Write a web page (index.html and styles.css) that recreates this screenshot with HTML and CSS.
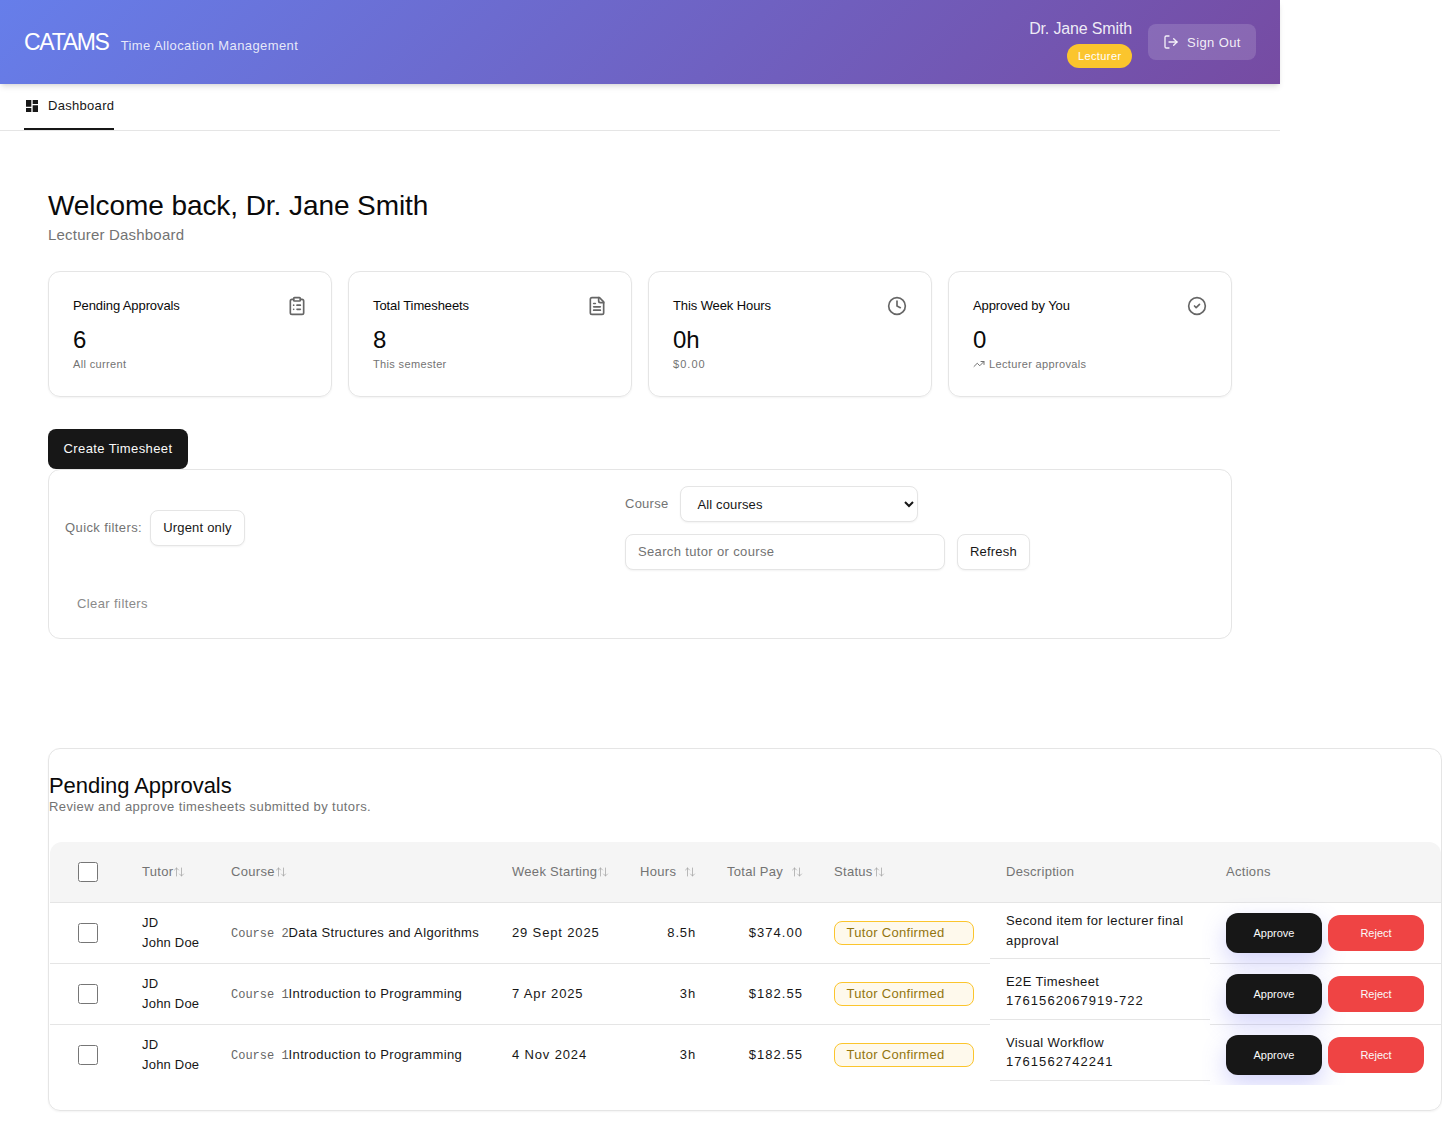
FILE: index.html
```html
<!DOCTYPE html>
<html lang="en">
<head>
    <meta charset="UTF-8">
    <title>CATAMS</title>
    <link rel="stylesheet" href="styles.css">
</head>
<body>
<div class="app">
    <header class="topbar">
        <div class="brand">
            <span class="brand-name">CATAMS</span>
            <span class="brand-sub">Time Allocation Management</span>
        </div>
        <div class="account">
            <div class="user">
                <span class="user-name">Dr. Jane Smith</span>
                <span class="role-badge">Lecturer</span>
            </div>
            <button class="signout">
                <svg class="icon-16" viewBox="0 0 24 24"><path d="M9 21H5a2 2 0 0 1-2-2V5a2 2 0 0 1 2-2h4"/><path d="M16 17l5-5-5-5"/><path d="M21 12H9"/></svg>
                Sign Out
            </button>
        </div>
    </header>

    <nav class="tabs">
        <a class="tab current">
            <svg class="icon-dash" viewBox="0 0 24 24"><path d="M3 13h8V3H3v10zm0 8h8v-6H3v6zm10 0h8V11h-8v10zm0-18v6h8V3h-8z"/></svg>
            Dashboard
        </a>
    </nav>

    <main class="main">
        <h1 class="page-title">Welcome back, Dr. Jane Smith</h1>
        <p class="page-sub">Lecturer Dashboard</p>

        <section class="stats">
            <div class="stat">
                <div class="stat-top">
                    <span>Pending Approvals</span>
                    <svg class="icon-20" viewBox="0 0 24 24"><rect x="8" y="2" width="8" height="4" rx="1"/><path d="M16 4h2a2 2 0 0 1 2 2v14a2 2 0 0 1-2 2H6a2 2 0 0 1-2-2V6a2 2 0 0 1 2-2h2"/><path d="M12 11h4"/><path d="M12 16h4"/><path d="M8 11h.01"/><path d="M8 16h.01"/></svg>
                </div>
                <div class="stat-value">6</div>
                <div class="stat-note">All current</div>
            </div>
            <div class="stat">
                <div class="stat-top">
                    <span>Total Timesheets</span>
                    <svg class="icon-20" viewBox="0 0 24 24"><path d="M15 2H6a2 2 0 0 0-2 2v16a2 2 0 0 0 2 2h12a2 2 0 0 0 2-2V7z"/><path d="M14 2v4a2 2 0 0 0 2 2h4"/><path d="M10 9H8"/><path d="M16 13H8"/><path d="M16 17H8"/></svg>
                </div>
                <div class="stat-value">8</div>
                <div class="stat-note">This semester</div>
            </div>
            <div class="stat">
                <div class="stat-top">
                    <span>This Week Hours</span>
                    <svg class="icon-20" viewBox="0 0 24 24"><circle cx="12" cy="12" r="10"/><path d="M12 6v6l4 2"/></svg>
                </div>
                <div class="stat-value">0h</div>
                <div class="stat-note digits">$0.00</div>
            </div>
            <div class="stat">
                <div class="stat-top">
                    <span>Approved by You</span>
                    <svg class="icon-20" viewBox="0 0 24 24"><circle cx="12" cy="12" r="10"/><path d="M9 12l2 2 4-4"/></svg>
                </div>
                <div class="stat-value">0</div>
                <div class="stat-note">
                    <svg class="icon-12" viewBox="0 0 24 24"><path d="M22 7l-8.5 8.5-5-5L2 17"/><path d="M16 7h6v6"/></svg>
                    Lecturer approvals
                </div>
            </div>
        </section>

        <button class="btn-create">Create Timesheet</button>

        <section class="filters">
            <div class="filters-row">
                <div class="quick">
                    <span class="muted">Quick filters:</span>
                    <button class="btn-plain">Urgent only</button>
                </div>
                <div class="filter-fields">
                    <div class="field-row">
                        <label class="muted field-label">Course</label>
                        <select class="course-select"><option>All courses</option></select>
                    </div>
                    <div class="field-row">
                        <input class="search" type="text" placeholder="Search tutor or course">
                        <button class="btn-plain">Refresh</button>
                    </div>
                </div>
            </div>
            <button class="btn-clear">Clear filters</button>
        </section>

        <section class="pending">
            <h2 class="pending-title">Pending Approvals</h2>
            <p class="pending-sub">Review and approve timesheets submitted by tutors.</p>

            <div class="table-wrap">
                <table class="approvals">
                    <colgroup>
                        <col class="c-check"><col class="c-tutor"><col class="c-course"><col class="c-week">
                        <col class="c-hours"><col class="c-pay"><col class="c-status"><col class="c-desc"><col class="c-actions">
                    </colgroup>
                    <thead>
                        <tr>
                            <th class="check-cell"><input type="checkbox"></th>
                            <th>Tutor<svg class="sort" viewBox="0 0 24 24"><path d="M21 16l-4 4-4-4"/><path d="M17 20V4"/><path d="M3 8l4-4 4 4"/><path d="M7 4v16"/></svg></th>
                            <th>Course<svg class="sort" viewBox="0 0 24 24"><path d="M21 16l-4 4-4-4"/><path d="M17 20V4"/><path d="M3 8l4-4 4 4"/><path d="M7 4v16"/></svg></th>
                            <th>Week Starting<svg class="sort" viewBox="0 0 24 24"><path d="M21 16l-4 4-4-4"/><path d="M17 20V4"/><path d="M3 8l4-4 4 4"/><path d="M7 4v16"/></svg></th>
                            <th class="num">Hours<svg class="sort sort-gap" viewBox="0 0 24 24"><path d="M21 16l-4 4-4-4"/><path d="M17 20V4"/><path d="M3 8l4-4 4 4"/><path d="M7 4v16"/></svg></th>
                            <th class="num">Total Pay<svg class="sort sort-gap" viewBox="0 0 24 24"><path d="M21 16l-4 4-4-4"/><path d="M17 20V4"/><path d="M3 8l4-4 4 4"/><path d="M7 4v16"/></svg></th>
                            <th>Status<svg class="sort" viewBox="0 0 24 24"><path d="M21 16l-4 4-4-4"/><path d="M17 20V4"/><path d="M3 8l4-4 4 4"/><path d="M7 4v16"/></svg></th>
                            <th>Description</th>
                            <th>Actions</th>
                        </tr>
                    </thead>
                    <tbody>
                        <tr>
                            <td class="check-cell"><input type="checkbox"></td>
                            <td class="tutor"><div>JD</div><div>John Doe</div></td>
                            <td class="course"><span class="code">Course 2</span>Data Structures and Algorithms</td>
                            <td class="date">29 Sept 2025</td>
                            <td class="num date">8.5h</td>
                            <td class="num digits">$374.00</td>
                            <td><span class="status">Tutor Confirmed</span></td>
                            <td class="desc">Second item for lecturer final approval</td>
                            <td><div class="actions"><button class="btn-approve">Approve</button><button class="btn-reject">Reject</button></div></td>
                        </tr>
                        <tr>
                            <td class="check-cell"><input type="checkbox"></td>
                            <td class="tutor"><div>JD</div><div>John Doe</div></td>
                            <td class="course"><span class="code">Course 1</span>Introduction to Programming</td>
                            <td class="date">7 Apr 2025</td>
                            <td class="num date">3h</td>
                            <td class="num digits">$182.55</td>
                            <td><span class="status">Tutor Confirmed</span></td>
                            <td class="desc">E2E Timesheet <span class="digits">1761562067919-722</span></td>
                            <td><div class="actions"><button class="btn-approve">Approve</button><button class="btn-reject">Reject</button></div></td>
                        </tr>
                        <tr>
                            <td class="check-cell"><input type="checkbox"></td>
                            <td class="tutor"><div>JD</div><div>John Doe</div></td>
                            <td class="course"><span class="code">Course 1</span>Introduction to Programming</td>
                            <td class="date">4 Nov 2024</td>
                            <td class="num date">3h</td>
                            <td class="num digits">$182.55</td>
                            <td><span class="status">Tutor Confirmed</span></td>
                            <td class="desc">Visual Workflow <span class="digits">1761562742241</span></td>
                            <td><div class="actions"><button class="btn-approve">Approve</button><button class="btn-reject">Reject</button></div></td>
                        </tr>
                    </tbody>
                </table>
            </div>
        </section>
    </main>
</div>
</body>
</html>
```

FILE: styles.css
```css
* {
    box-sizing: border-box;
    margin: 0;
    padding: 0;
}
body {
    font-family: "Liberation Sans", Arial, sans-serif;
    font-size: 13px;
    line-height: 1.5;
    letter-spacing: .4px;
    color: #171717;
    background: #fff;
}
button, input, select {
    font-family: inherit;
    font-size: 13px;
    letter-spacing: inherit;
}
svg {
    fill: none;
    stroke: currentColor;
    stroke-width: 2;
    stroke-linecap: round;
    stroke-linejoin: round;
}
.app {
    width: 1280px;
}
.approvals .digits, .stat-note.digits, .desc .digits {
    letter-spacing: 1.05px;
}
.approvals .date {
    letter-spacing: .85px;
}

/* header */
.topbar {
    height: 84px;
    padding: 0 24px;
    display: flex;
    align-items: center;
    justify-content: space-between;
    background: linear-gradient(135deg, #667eea 0%, #764ba2 100%);
    color: #fff;
    box-shadow: 0 4px 6px -1px rgba(0, 0, 0, .1), 0 2px 4px -2px rgba(0, 0, 0, .1);
}
.brand {
    display: flex;
    align-items: baseline;
    gap: 12px;
}
.brand-name {
    font-size: 23px;
    line-height: 32px;
    letter-spacing: -1.3px;
}
.brand-sub {
    color: rgba(255, 255, 255, .85);
}
.account {
    display: flex;
    align-items: center;
    gap: 16px;
}
.user {
    display: flex;
    flex-direction: column;
    align-items: flex-end;
    gap: 2px;
}
.user-name {
    font-size: 16px;
    line-height: 26px;
    letter-spacing: -.15px;
    color: rgba(255, 255, 255, .9);
}
.role-badge {
    height: 24px;
    padding: 0 10.5px;
    border-radius: 12px;
    background: #fbc52d;
    font-size: 11px;
    line-height: 24px;
}
.signout {
    height: 36px;
    width: 108px;
    display: flex;
    align-items: center;
    justify-content: center;
    gap: 8px;
    border: 0;
    border-radius: 8px;
    background: rgba(255, 255, 255, .15);
    color: rgba(255, 255, 255, .9);
}
.icon-16 {
    width: 16px;
    height: 16px;
}
.icon-20 {
    width: 20px;
    height: 20px;
    color: #666;
}
.icon-12 {
    width: 12px;
    height: 12px;
}

/* tabs */
.tabs {
    height: 47px;
    padding: 0 24px;
    border-bottom: 1px solid #e5e5e5;
    display: flex;
}
.tab {
    height: 46px;
    display: flex;
    align-items: center;
    gap: 8px;
    letter-spacing: .3px;
    color: #171717;
}
.tab.current {
    border-bottom: 2px solid #171717;
}
.icon-dash {
    width: 16px;
    height: 16px;
    fill: #171717;
    stroke: none;
}

/* main */
.main {
    padding: 58px 48px 32px;
}
.page-title {
    font-size: 28px;
    font-weight: 400;
    line-height: 34px;
    letter-spacing: -.07px;
    color: #0a0a0a;
}
.page-sub {
    font-size: 15px;
    line-height: 24px;
    letter-spacing: .2px;
    color: #737373;
}

.stats {
    margin-top: 24px;
    display: grid;
    grid-template-columns: repeat(4, 1fr);
    gap: 16px;
}
.stat {
    height: 126px;
    padding: 24px;
    border: 1px solid #e5e5e5;
    border-radius: 12px;
    box-shadow: 0 1px 2px rgba(0, 0, 0, .05);
}
.stat-top {
    height: 20px;
    display: flex;
    align-items: center;
    justify-content: space-between;
    letter-spacing: -.1px;
    color: #0a0a0a;
}
.stat-value {
    margin-top: 9px;
    font-size: 24px;
    line-height: 29px;
    letter-spacing: 0;
    color: #0a0a0a;
}
.stat-note {
    margin-top: 1px;
    display: flex;
    align-items: center;
    gap: 4px;
    font-size: 11px;
    line-height: 18px;
    letter-spacing: .35px;
    color: #737373;
}

.btn-create {
    display: block;
    width: 140px;
    height: 40px;
    margin-top: 32px;
    padding-bottom: 2px;
    border: 0;
    border-radius: 8px;
    background: #171717;
    color: #fafafa;
}

/* filters */
.filters {
    padding: 16px;
    border: 1px solid #e5e5e5;
    border-radius: 12px;
}
.filters-row {
    display: grid;
    grid-template-columns: 544px 1fr;
    gap: 16px;
    align-items: center;
}
.quick {
    display: flex;
    align-items: center;
    gap: 8px;
}
.muted {
    color: #737373;
}
.btn-plain {
    height: 36px;
    padding: 0 12px 2px;
    border: 1px solid #e5e5e5;
    border-radius: 8px;
    background: #fff;
    color: #171717;
    letter-spacing: .2px;
    box-shadow: 0 1px 2px rgba(0, 0, 0, .05);
}
.filter-fields {
    display: flex;
    flex-direction: column;
    gap: 12px;
}
.field-row {
    display: flex;
    align-items: center;
    gap: 12px;
}
.field-label {
    letter-spacing: .25px;
}
.course-select {
    width: 238px;
    height: 36px;
    padding: 0 12px;
    border: 1px solid #e5e5e5;
    border-radius: 8px;
    background: #fff;
    color: #171717;
    letter-spacing: .15px;
    box-shadow: 0 1px 2px rgba(0, 0, 0, .05);
}
.search {
    width: 320px;
    height: 36px;
    padding: 0 12px 2px;
    border: 1px solid #e5e5e5;
    border-radius: 8px;
    letter-spacing: .35px;
    box-shadow: 0 1px 2px rgba(0, 0, 0, .05);
}
.search::placeholder {
    color: #737373;
}
.btn-clear {
    display: block;
    height: 36px;
    margin-top: 16px;
    padding: 0 12px 2px;
    border: 0;
    background: none;
    color: #8a8a8a;
}

/* pending approvals */
.pending {
    width: 1394px;
    height: 363px;
    margin-top: 109px;
    padding: 25px 0 0;
    border: 1px solid #e5e5e5;
    border-radius: 12px;
    box-shadow: 0 1px 2px rgba(0, 0, 0, .05);
}
.pending-title {
    font-size: 22px;
    font-weight: 400;
    line-height: 23px;
    letter-spacing: -.05px;
    color: #0a0a0a;
}
.pending-sub {
    line-height: 19px;
    color: #737373;
}
.table-wrap {
    margin: 26px 0 0 1px;
    overflow: hidden;
    border-radius: 12px;
}
.approvals {
    width: 1391px;
    table-layout: fixed;
    border-collapse: separate;
    border-spacing: 0;
}
.c-check { width: 76px; }
.c-tutor { width: 89px; }
.c-course { width: 281px; }
.c-week { width: 128px; }
.c-hours { width: 87px; }
.c-pay { width: 107px; }
.c-status { width: 172px; }
.c-desc { width: 220px; }
.c-actions { width: 231px; }

.approvals th {
    height: 61px;
    padding: 0 16px;
    border-bottom: 1px solid #e5e5e5;
    background: #f5f5f5;
    color: #737373;
    font-weight: 400;
    letter-spacing: .3px;
    text-align: left;
    white-space: nowrap;
}
.approvals td {
    height: 61px;
    padding: 0 16px;
    border-bottom: 1px solid #e5e5e5;
    color: #171717;
}
.approvals td.tutor {
    padding-bottom: 1px;
    letter-spacing: .2px;
    white-space: nowrap;
}
.approvals td.course {
    letter-spacing: .35px;
    white-space: nowrap;
}
.approvals tbody tr:last-child td {
    height: 60px;
    border-bottom: 0;
}
.approvals th.num {
    padding-right: 17px;
    text-align: right;
}
.approvals td.num {
    padding-right: 15px;
    text-align: right;
}
.approvals .check-cell {
    padding-left: 28px;
}
.check-cell input {
    display: block;
    width: 20px;
    height: 20px;
}
.sort {
    width: 12px;
    height: 12px;
    margin-bottom: -2px;
    color: #a3a3a3;
    stroke-width: 1.5;
}
.sort-gap {
    margin-left: 8px;
}
.code {
    font-family: "Liberation Mono", monospace;
    font-size: 12px;
    letter-spacing: 0;
    color: #666;
}
.status {
    display: block;
    width: 140px;
    height: 24px;
    padding: 0 12px 0 11.5px;
    border: 1px solid #fbc52d;
    border-radius: 8px;
    background: #fef9ec;
    color: #92750f;
    letter-spacing: .3px;
    line-height: 22px;
}
.approvals td.desc, .approvals tbody tr:last-child td.desc {
    display: block;
    height: 56px;
    padding: 8px 16px;
    border-bottom: 1px solid #e5e5e5;
}
.desc .digits {
    display: block;
    line-height: 18.5px;
}
.actions {
    display: flex;
    align-items: center;
    gap: 6px;
}
.btn-approve, .btn-reject {
    width: 96px;
    border: 0;
    border-radius: 12px;
    color: #fafafa;
    font-size: 11px;
    letter-spacing: 0;
}
.btn-approve {
    height: 40px;
    background: #171717;
    box-shadow: 0 10px 25px rgba(99, 102, 241, .28);
}
.btn-reject {
    height: 36px;
    background: #ef4444;
}
```
